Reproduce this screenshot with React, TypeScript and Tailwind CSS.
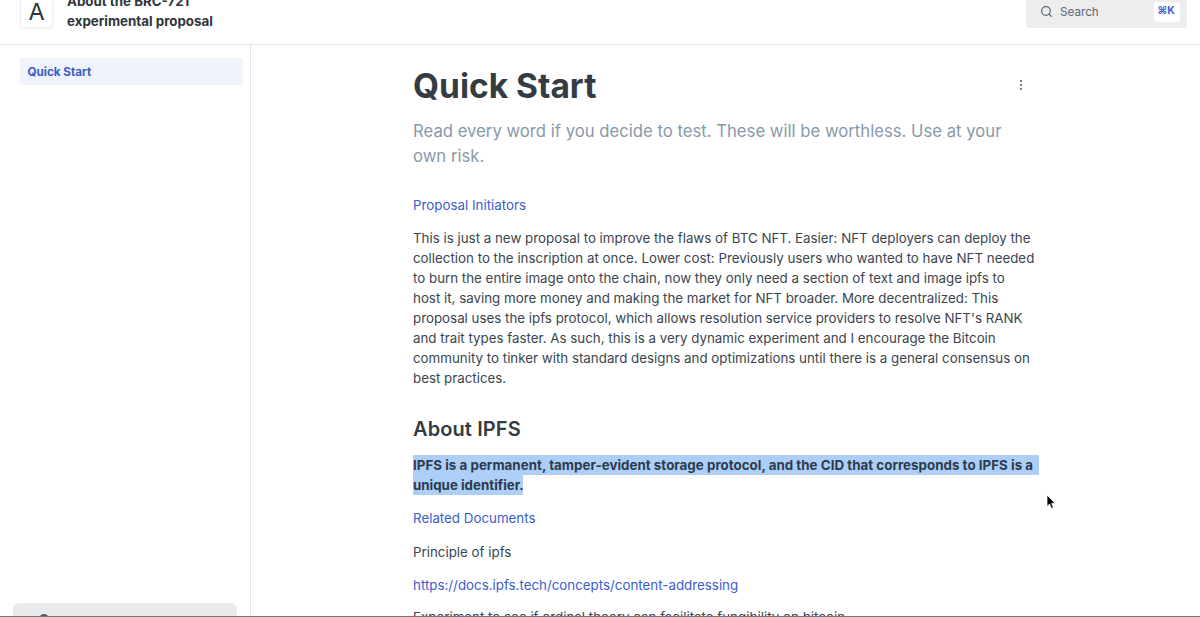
import { Search } from "lucide-react";

function Header() {
  return (
    <header className="flex h-[45px] shrink-0 items-end justify-between border-b border-[#e2e5e8] pl-5 pr-[13px]">
      <div className="flex items-end">
        <div className="mb-4 flex h-[33px] w-[33px] items-center justify-center rounded-[3px] border border-[#efefef] pt-px text-[23.5px] leading-none text-[#2f363c] shadow-xs">
          A
        </div>
        <div className="mb-[13px] ml-[14px] w-[160px] text-[13.33px] font-bold leading-[20px] text-[#2f363c]">
          About the BRC-721 experimental proposal
        </div>
      </div>
      <div className="mb-4 flex h-[33px] w-[161px] items-center rounded-[4px] bg-[#ededed] pl-[14px] pr-[7px]">
        <Search className="h-[13px] w-[13px] text-[#5c6975]" strokeWidth={2.2} />
        <span className="ml-[7px] flex-1 text-[11.67px] leading-[20px] text-[#5c6975]">Search</span>
        <span className="flex h-5 w-[26px] items-center justify-center rounded-[3px] bg-white pb-px pr-[2px] text-[10.5px] font-bold text-[#3d61cc]">
          ⌘K
        </span>
      </div>
    </header>
  );
}

function Sidebar() {
  return (
    <aside className="flex w-[251px] shrink-0 flex-col justify-between border-r border-[#e2e5e8]">
      <a href="#" className="ml-5 mr-[7px] mt-[13px] flex h-[27px] items-center rounded-[3px] bg-[#f0f3f9] pl-[7.5px] text-[11.67px] font-bold text-[#3b5ccc]">
        Quick Start
      </a>
      <div className="ml-[13px] mr-[13px] h-[14px] overflow-hidden rounded-t-[6px] bg-[#e9eaeb] pl-[26px] pt-[11px]">
        <div className="h-[12px] w-[10px] rounded-full bg-[#4b5c6b]" />
      </div>
    </aside>
  );
}

function App() {
  return (
    <div className="relative flex h-[617px] flex-col overflow-hidden bg-white font-['Inter',sans-serif] text-[13.33px] leading-[20px] text-[#3b454e]">
      <Header />
      <div className="flex min-h-0 flex-1">
        <Sidebar />
        <main className="ml-[162px] w-[626px] overflow-hidden">
          <div className="mt-5 flex h-10 items-center justify-between">
            <h1 className="pt-px text-[33.5px] font-bold leading-[40px] text-[#343b42]">Quick Start</h1>
            <button className="mr-[17px] flex h-5 w-[3px] flex-col items-center justify-center gap-[2px]">
              <span className="h-[2px] w-[2px] rounded-full bg-[#4b5560]" />
              <span className="h-[2px] w-[2px] rounded-full bg-[#4b5560]" />
              <span className="h-[2px] w-[2px] rounded-full bg-[#4b5560]" />
            </button>
          </div>
          <p className="mt-[13.5px] w-[622px] text-[16.7px] leading-[25px] text-[#8899a8]">
            Read every word if you decide to test. These will be worthless. Use at your own risk.
          </p>
          <p className="mt-[26.5px] text-[#3b5ccc]">Proposal Initiators</p>
          <p className="mt-[13.33px] w-[622px]">
            This is just a new proposal to improve the flaws of BTC NFT. Easier: NFT deployers can deploy the
            collection to the inscription at once. Lower cost: Previously users who wanted to have NFT needed
            to burn the entire image onto the chain, now they only need a section of text and image ipfs to
            host it, saving more money and making the market for NFT broader. More decentralized: This
            proposal uses the ipfs protocol, which allows resolution service providers to resolve NFT's RANK
            and trait types faster. As such, this is a very dynamic experiment and I encourage the Bitcoin
            community to tinker with standard designs and optimizations until there is a general consensus on
            best practices.
          </p>
          <h2 className="mt-[26px] text-[20px] font-semibold leading-[30px] tracking-[0.1px] text-[#343b42]">About IPFS</h2>
          <div className="mt-[11px] font-bold text-[#2c3b4c]">
            <p className="h-5 w-[626px] whitespace-nowrap bg-[#accef7] tracking-[0.026px]">
              IPFS is a permanent, tamper-evident storage protocol, and the CID that corresponds to IPFS is a
            </p>
            <p className="h-5 w-[110px] whitespace-nowrap bg-[#accef7]">unique identifier.</p>
          </div>
          <p className="mt-[13px] text-[#3b5ccc]">Related Documents</p>
          <p className="mt-[13.33px]">Principle of ipfs</p>
          <p className="mt-[13.33px] text-[#3b5ccc]">https://docs.ipfs.tech/concepts/content-addressing</p>
          <p className="mt-[12.5px]">Experiment to see if ordinal theory can facilitate fungibility on bitcoin</p>
        </main>
      </div>
      <div className="absolute bottom-0 left-0 h-px w-full bg-[#777]" />
      {/* mouse pointer */}
      <svg className="absolute left-[1046px] top-[494px]" width="11" height="16" viewBox="0 0 11 16">
        <path d="M1 1v11.5l2.6-2.4 1.9 4.3 2-0.9-1.9-4.1h3.6z" fill="#000" stroke="#fff" strokeWidth="0.8" />
      </svg>
    </div>
  );
}

export default App;
